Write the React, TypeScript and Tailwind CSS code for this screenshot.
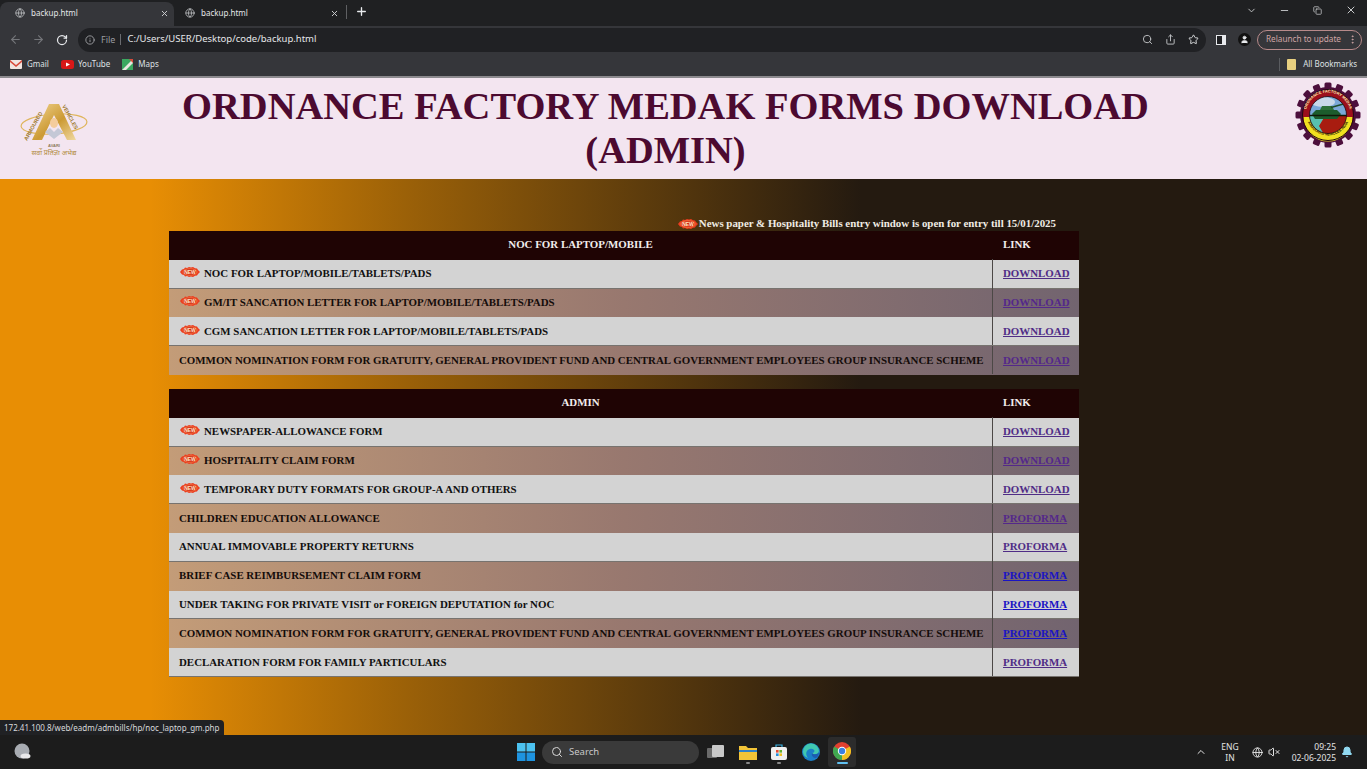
import { ArrowLeft, ArrowRight, ChevronDown, ChevronUp, Copy, EllipsisVertical, Globe, Info, Minus, Plus, RotateCw, Search, Share, Star, User, VolumeX, X, Bell } from 'lucide-react'

type Row = { name: string; label: string; isNew?: boolean; blue?: boolean }

const nocRows: Row[] = [
    { name: 'NOC FOR LAPTOP/MOBILE/TABLETS/PADS', label: 'DOWNLOAD', isNew: true },
    { name: 'GM/IT SANCATION LETTER FOR LAPTOP/MOBILE/TABLETS/PADS', label: 'DOWNLOAD', isNew: true },
    { name: 'CGM SANCATION LETTER FOR LAPTOP/MOBILE/TABLETS/PADS', label: 'DOWNLOAD', isNew: true },
    { name: 'COMMON NOMINATION FORM FOR GRATUITY, GENERAL PROVIDENT FUND AND CENTRAL GOVERNMENT EMPLOYEES GROUP INSURANCE SCHEME', label: 'DOWNLOAD' },
]

const adminRows: Row[] = [
    { name: 'NEWSPAPER-ALLOWANCE FORM', label: 'DOWNLOAD', isNew: true },
    { name: 'HOSPITALITY CLAIM FORM', label: 'DOWNLOAD', isNew: true },
    { name: 'TEMPORARY DUTY FORMATS FOR GROUP-A AND OTHERS', label: 'DOWNLOAD', isNew: true },
    { name: 'CHILDREN EDUCATION ALLOWANCE', label: 'PROFORMA' },
    { name: 'ANNUAL IMMOVABLE PROPERTY RETURNS', label: 'PROFORMA' },
    { name: 'BRIEF CASE REIMBURSEMENT CLAIM FORM', label: 'PROFORMA', blue: true },
    { name: 'UNDER TAKING FOR PRIVATE VISIT or FOREIGN DEPUTATION for NOC', label: 'PROFORMA', blue: true },
    { name: 'COMMON NOMINATION FORM FOR GRATUITY, GENERAL PROVIDENT FUND AND CENTRAL GOVERNMENT EMPLOYEES GROUP INSURANCE SCHEME', label: 'PROFORMA', blue: true },
    { name: 'DECLARATION FORM FOR FAMILY PARTICULARS', label: 'PROFORMA' },
]

const NewBadge = () => (
    <svg width="22" height="12" viewBox="0 0 22 12" className="shrink-0">
        <path d="M1 6 L3 3.5 L5 3 L6 1.6 L8 2 L10 1 L12 1.6 L14 1 L16 2.2 L18 2.6 L19 4 L21 6 L19 8 L18 9.4 L16 9.8 L14 11 L12 10.4 L10 11 L8 10 L6 10.4 L5 9 L3 8.5 Z" fill="#ec3c1e" />
        <ellipse cx="11" cy="6" rx="7" ry="3.2" fill="#d0200f" stroke="#f8a060" strokeWidth="0.6" />
        <text x="11" y="7.8" textAnchor="middle" fontSize="5" fontWeight="700" fontFamily="Liberation Sans, sans-serif" fill="#ffe9c8">NEW</text>
    </svg>
)

const ArmouredLogo = () => (
    <svg width="70" height="56" viewBox="0 0 70 56" className="shrink-0">
        <defs>
            <linearGradient id="goldA" x1="0" y1="0" x2="1" y2="1">
                <stop offset="0" stopColor="#f2d592" />
                <stop offset="0.55" stopColor="#cc9a34" />
                <stop offset="1" stopColor="#f0d8a0" />
            </linearGradient>
            <path id="armLeft" d="M7 38 L26 4" />
            <path id="armRight" d="M42 3 L61 38" />
        </defs>
        <ellipse cx="34" cy="21" rx="33" ry="10" fill="none" stroke="#dfb55c" strokeWidth="1.2" transform="rotate(-4 34 21)" />
        <path d="M29 1 L39 1 L56 37 L47 37 L34 12 L22 37 L12 37 Z" fill="url(#goldA)" />
        <path d="M25 29 L34 36 L43 29 L38 25 L34 29 L30 25 Z" fill="#c4c8d6" />
        <ellipse cx="34" cy="20" rx="4" ry="5" fill="#f4cc9c" />
        <text fontSize="5.4" fontWeight="700" fontFamily="Liberation Sans, sans-serif" fill="#a07c30"><textPath href="#armLeft">ARMOURED</textPath></text>
        <text fontSize="5.4" fontWeight="700" fontFamily="Liberation Sans, sans-serif" fill="#a07c30"><textPath href="#armRight">VEHICLES</textPath></text>
        <text x="34" y="44" textAnchor="middle" fontSize="4" fontWeight="700" fontFamily="Liberation Sans, sans-serif" fill="#8c7a5c">AVARI</text>
        <text x="34" y="52" textAnchor="middle" fontSize="7" fontFamily="Noto Sans, Liberation Sans, sans-serif" fill="#b08a3c">सर्वो प्रतिज्ञा अभेद्य</text>
    </svg>
)

const teeth = Array.from({ length: 16 }, (_, i) => (i * 360) / 16)

const FactoryLogo = () => (
    <svg width="66" height="66" viewBox="0 0 66 66" className="shrink-0">
        <defs>
            <clipPath id="inner"><circle cx="33" cy="33" r="18.5" /></clipPath>
            <path id="ringTop" d="M10.5 33 A22.5 22.5 0 0 1 55.5 33" />
            <path id="ringBottom" d="M12 38 A22 22 0 0 0 54 38" />
        </defs>
        {teeth.map((deg) => (
            <rect key={deg} x="29.5" y="0.5" width="7" height="8" rx="1.5" fill="#4c0f3c" transform={`rotate(${deg} 33 33)`} />
        ))}
        <circle cx="33" cy="33" r="28" fill="#4c0f3c" />
        <circle cx="33" cy="33" r="25.5" fill="#9c0f1c" />
        <path d="M8.5 35 H57.5 A24.5 24.5 0 0 1 8.5 35 Z" fill="#f0e020" />
        <circle cx="33" cy="33" r="25.5" fill="none" stroke="#200810" strokeWidth="1" />
        <text fontSize="4" fontWeight="700" fontFamily="Liberation Sans, sans-serif" fill="#f6e8b0" textAnchor="middle"><textPath href="#ringTop" startOffset="50%">ORDNANCE FACTORY MEDAK</textPath></text>
        <text fontSize="3.6" fontWeight="700" fontFamily="Liberation Sans, sans-serif" fill="#301808" textAnchor="middle"><textPath href="#ringBottom" startOffset="50%">ARMOURED VEHICLES INDIA</textPath></text>
        <g clipPath="url(#inner)">
            <rect x="12" y="12" width="42" height="22" fill="#7aa8d8" />
            <ellipse cx="28" cy="20" rx="12" ry="5" fill="#c8d8e8" />
            <rect x="12" y="34" width="42" height="20" fill="#a81c10" />
            <path d="M12 34 H30 L24 44 L30 54 H12 Z" fill="#58c0b0" />
            <path d="M17 32 L21 28 H42 L46 32 L42 37 H20 Z" fill="#1c5c2c" />
            <path d="M25 28 L27 24 H37 L39 28 Z" fill="#2c7038" />
            <path d="M36 25.5 L52 21" stroke="#1c4c28" strokeWidth="1.4" />
        </g>
        <path d="M14.5 33.5 H51.5" stroke="#101808" strokeWidth="1.4" />
        <circle cx="33" cy="33" r="18.5" fill="none" stroke="#200810" strokeWidth="0.8" />
    </svg>
)

const TableBlock = ({ title, rows }: { title: string; rows: Row[] }) => (
    <div className="w-[910px] font-['Liberation_Serif',serif] font-bold text-[10.9px]">
        <div className="flex h-[28.8px] items-center bg-[#1f0404] pb-[2px] text-[#f2ecec]">
            <div className="flex-1 text-center">{title}</div>
            <div className="w-[87px] pl-[11px]">LINK</div>
        </div>
        {rows.map((row, i) => {
            const odd = i % 2 === 0
            return (
                <div
                    key={row.name}
                    className={odd ? 'flex h-[28.8px] items-center border-b border-[#77736f] bg-[#d3d3d3] pb-[0.5px] text-[#111]' : 'flex h-[28.8px] items-center bg-gradient-to-r from-[#c39c78] via-[#98786f] to-[#72646f] pb-[1px] text-[#140c0a]'}
                >
                    <div className="flex flex-1 items-center gap-[3px] pl-[10px] whitespace-nowrap">
                        {row.isNew && <span className="-mt-[3px]"><NewBadge /></span>}
                        {row.name}
                    </div>
                    <div className="flex h-[28.8px] w-[87px] items-center border-l border-[#4c4846] pl-[10px]">
                        <a href="#" className={row.blue ? 'underline text-[#1a14c4]' : odd ? 'underline text-[#4f2c86]' : 'underline text-[#54288a]'}>{row.label}</a>
                    </div>
                </div>
            )
        })}
    </div>
)

const Tab = ({ active }: { active?: boolean }) => (
    <div className={active ? 'flex h-[24px] w-[174px] items-center rounded-t-lg bg-[#35363a] pb-[2px] pl-[15px] pr-[5px]' : 'flex h-[24px] w-[172px] items-center pb-[2px] pl-[11px] pr-[7px]'}>
        <Globe size={10} className="text-[#b8babd]" />
        <span className="ml-[6px] flex-1 text-[8px] text-[#e4e6e8]">backup.html</span>
        <X size={9} strokeWidth={2.5} className="text-[#d0d2d4]" />
    </div>
)

const ChromeBar = () => (
    <div className="font-['Noto_Sans',sans-serif]">
        <div className="flex h-[26px] items-end bg-[#1f2022]">
            <Tab active />
            <Tab />
            <div className="mb-[7px] h-[14px] w-px bg-[#5f6063]" />
            <Plus size={13} strokeWidth={2.5} className="mb-[8px] ml-[8px] text-[#e8eaed]" />
            <div className="flex-1" />
            <div className="mb-[10px] flex items-center text-[#c8cacc]">
                <div className="flex w-[33px] justify-center"><ChevronDown size={11} /></div>
                <div className="flex w-[33px] justify-center"><Minus size={11} /></div>
                <div className="flex w-[33px] justify-center"><Copy size={9} /></div>
                <div className="flex w-[33px] justify-center"><X size={12} /></div>
            </div>
        </div>
        <div className="flex h-[26px] items-center bg-[#35363a] pl-[9px] pt-[1px]">
            <ArrowLeft size={13} className="text-[#74767a]" />
            <ArrowRight size={13} className="ml-[10px] text-[#74767a]" />
            <RotateCw size={12} strokeWidth={2.5} className="ml-[11px] text-[#e8eaed]" />
            <div className="ml-[10px] flex h-[24px] w-[1128px] items-center rounded-full bg-[#202124] pl-[7px] pr-[7px]">
                <Info size={10} className="text-[#a8aaad]" />
                <span className="ml-[6px] text-[9px] text-[#9a9ca0]">File</span>
                <div className="ml-[5px] h-[11px] w-px bg-[#6a6c70]" />
                <span className="ml-[6px] flex-1 text-[9.5px] text-[#e6e8ea]">C:/Users/USER/Desktop/code/backup.html</span>
                <Search size={11} className="text-[#c4c6c8]" />
                <Share size={11} className="ml-[12px] text-[#c4c6c8]" />
                <Star size={11} className="ml-[12px] text-[#e0e2e4]" />
            </div>
            <div className="ml-[10px] flex h-[10px] w-[10px] justify-end border border-[#e8eaed] bg-[#202124]"><div className="h-full w-[3px] bg-[#e8eaed]" /></div>
            <div className="ml-[12px] flex h-[13px] w-[13px] items-center justify-center rounded-full bg-[#111]"><User size={9} fill="#e8eaed" className="text-[#e8eaed]" /></div>
            <div className="ml-[6px] flex h-[20px] w-[105px] items-center justify-between rounded-full border border-[#b88a8a] pl-[8px] pr-[3px] text-[#cfa5a5]">
                <span className="text-[8.2px]">Relaunch to update</span>
                <EllipsisVertical size={11} />
            </div>
        </div>
        <div className="flex h-[24px] items-center bg-[#35363a] pl-[10px] text-[8px] text-[#dfe1e3]">
            <svg width="12" height="9" viewBox="0 0 12 9"><rect width="12" height="9" rx="1" fill="#f0e4e0" /><path d="M0 0 L6 5 L12 0 V2 L6 7 L0 2 Z" fill="#d84a3a" /></svg>
            <span className="ml-[5px]">Gmail</span>
            <svg width="13" height="9" viewBox="0 0 13 9" className="ml-[12px]"><rect width="13" height="9" rx="2.5" fill="#d81818" /><path d="M5 2.5 L9 4.5 L5 6.5 Z" fill="#fff" /></svg>
            <span className="ml-[4px]">YouTube</span>
            <svg width="11" height="11" viewBox="0 0 11 11" className="ml-[12px]"><rect width="11" height="11" fill="#3aa860" /><path d="M0 11 L11 0 V4 L4 11 Z" fill="#e8e8e0" /><path d="M7 0 H11 V4 Z" fill="#d84a3a" /></svg>
            <span className="ml-[5px]">Maps</span>
            <div className="flex-1" />
            <div className="mr-[7px] h-[13px] w-px bg-[#5a5c60]" />
            <div className="h-[11px] w-[9px] rounded-[1px] bg-[#e8d080]" />
            <span className="ml-[7px] mr-[10px]">All Bookmarks</span>
        </div>
        <div className="h-[2px] bg-[#8c8a8e]" />
    </div>
)

const Taskbar = () => (
    <div className="flex h-[34px] items-center bg-[#1c1c1c] font-['Noto_Sans',sans-serif] text-[#e4e4e4]">
        <svg width="18" height="18" viewBox="0 0 18 18" className="ml-[13px]">
            <circle cx="9" cy="8" r="7.5" fill="#a8acb2" />
            <ellipse cx="12.5" cy="13" rx="5" ry="2.6" fill="#e8e8ea" />
        </svg>
        <div className="ml-[486px] flex items-center">
            <svg width="18" height="18" viewBox="0 0 18 18">
                <rect width="8.5" height="8.5" fill="#4cc2f0" />
                <rect x="9.5" width="8.5" height="8.5" fill="#4cc2f0" />
                <rect y="9.5" width="8.5" height="8.5" fill="#1e94e0" />
                <rect x="9.5" y="9.5" width="8.5" height="8.5" fill="#1e94e0" />
            </svg>
            <div className="ml-[7px] flex h-[23px] w-[157px] items-center rounded-full bg-[#3a3a3a] pl-[9px]">
                <Search size={12} className="text-[#d8d8d8]" />
                <span className="ml-[6px] text-[9.5px] text-[#c8c8c8]">Search</span>
            </div>
            <svg width="18" height="16" viewBox="0 0 18 16" className="ml-[8px]">
                <rect y="4" width="10" height="10" rx="1" fill="#6a6a6a" />
                <rect x="5" y="1" width="12" height="12" rx="1" fill="#c8c8c8" />
            </svg>
            <div className="relative ml-[14px]">
                <svg width="18" height="15" viewBox="0 0 18 15">
                    <path d="M0 1 H7 L9 3 H18 V15 H0 Z" fill="#f2c438" />
                    <rect y="5" width="18" height="2" fill="#2f80c8" />
                </svg>
                <div className="absolute -bottom-[4px] left-[7px] h-[2px] w-[4px] rounded bg-[#8a8a8a]" />
            </div>
            <div className="relative ml-[14px]">
                <svg width="16" height="16" viewBox="0 0 16 16">
                    <path d="M5 3 V1 H11 V3" fill="none" stroke="#38b0e0" strokeWidth="1.2" />
                    <rect y="3" width="16" height="13" rx="2" fill="#f0f0f0" />
                    <rect x="5" y="6" width="2.6" height="2.6" fill="#e84a30" />
                    <rect x="8.4" y="6" width="2.6" height="2.6" fill="#60b030" />
                    <rect x="5" y="9.4" width="2.6" height="2.6" fill="#2090e0" />
                    <rect x="8.4" y="9.4" width="2.6" height="2.6" fill="#f0c020" />
                </svg>
                <div className="absolute -bottom-[4px] left-[6px] h-[2px] w-[4px] rounded bg-[#8a8a8a]" />
            </div>
            <svg width="18" height="18" viewBox="0 0 18 18" className="ml-[15px]">
                <circle cx="9" cy="9" r="9" fill="#1a7fc8" />
                <path d="M1 9 A8 8 0 0 1 17 8 C17 12 11 12 10 10 C14 10 13 5 8 6 C4 7 3 11 6 15 C3 14 1 12 1 9 Z" fill="#40c8b0" />
                <path d="M17 8 C17 12 11 12 10 10 C9 13 12 16 15 14.5 C16.5 13 17 10 17 8 Z" fill="#1c5cb0" />
            </svg>
            <div className="ml-[8px] flex h-[30px] w-[28px] flex-col items-center justify-center rounded-[3px] bg-[#2c2c2c]">
                <svg width="18" height="18" viewBox="0 0 18 18" className="mt-[2px]">
                    <circle cx="9" cy="9" r="9" fill="#e04030" />
                    <path d="M9 9 L1.2 4.5 A9 9 0 0 0 9 18 Z" fill="#40a850" />
                    <path d="M9 9 L16.8 4.5 A9 9 0 0 1 9 18 Z" fill="#f0c020" />
                    <circle cx="9" cy="9" r="4.2" fill="#fff" />
                    <circle cx="9" cy="9" r="3.2" fill="#3a80e0" />
                </svg>
                <div className="mt-[2px] h-[2px] w-[11px] rounded bg-[#60c0f0]" />
            </div>
        </div>
        <div className="flex-1" />
        <ChevronUp size={12} className="mr-[14px]" />
        <div className="mr-[13px] text-center text-[8.5px] leading-[11px]">ENG<br />IN</div>
        <Globe size={11} className="mr-[5px]" />
        <VolumeX size={12} className="mr-[12px]" />
        <div className="mr-[5px] text-right text-[8.5px] leading-[11px]">09:25<br />02-06-2025</div>
        <Bell size={12} fill="#90d8f0" className="mr-[14px] text-[#90d8f0]" />
    </div>
)

const App = () => {
    return (
        <div className="relative flex h-screen flex-col overflow-hidden">
            <ChromeBar />
            <header className="flex h-[101px] shrink-0 items-start bg-[#f3e5f0]">
                <div className="ml-[20px] mt-[25px] w-[70px]"><ArmouredLogo /></div>
                <h1 className="ml-[17px] w-[1117px] pt-[6px] text-center font-['Liberation_Serif',serif] text-[38.5px] leading-[44px] font-bold text-[#4c0a30]">
                    ORDNANCE FACTORY MEDAK FORMS DOWNLOAD<br />(ADMIN)
                </h1>
                <div className="ml-[71px] mt-[4px]"><FactoryLogo /></div>
            </header>
            <main className="flex min-h-0 flex-1 flex-col bg-[linear-gradient(to_right,#e88e04_11%,#9a6008_30%,#241a10_63%)] pl-[169px] pt-[37px]">
                <div className="flex h-[15px] w-[910px] items-center justify-end pr-[23px] font-['Liberation_Serif',serif] text-[10.9px] font-bold text-[#f0ece4]">
                    <NewBadge />
                    News paper &amp; Hospitality Bills entry window is open for entry till 15/01/2025
                </div>
                <TableBlock title="NOC FOR LAPTOP/MOBILE" rows={nocRows} />
                <div className="h-[14px] shrink-0" />
                <TableBlock title="ADMIN" rows={adminRows} />
            </main>
            <div className="absolute bottom-[34px] left-0 flex h-[15px] w-[224px] items-center rounded-tr-sm bg-[#202124] pl-[4px] font-['Noto_Sans',sans-serif] text-[8px] text-[#d8dadc]">
                172.41.100.8/web/eadm/admbills/hp/noc_laptop_gm.php
            </div>
            <Taskbar />
        </div>
    )
}

export default App
